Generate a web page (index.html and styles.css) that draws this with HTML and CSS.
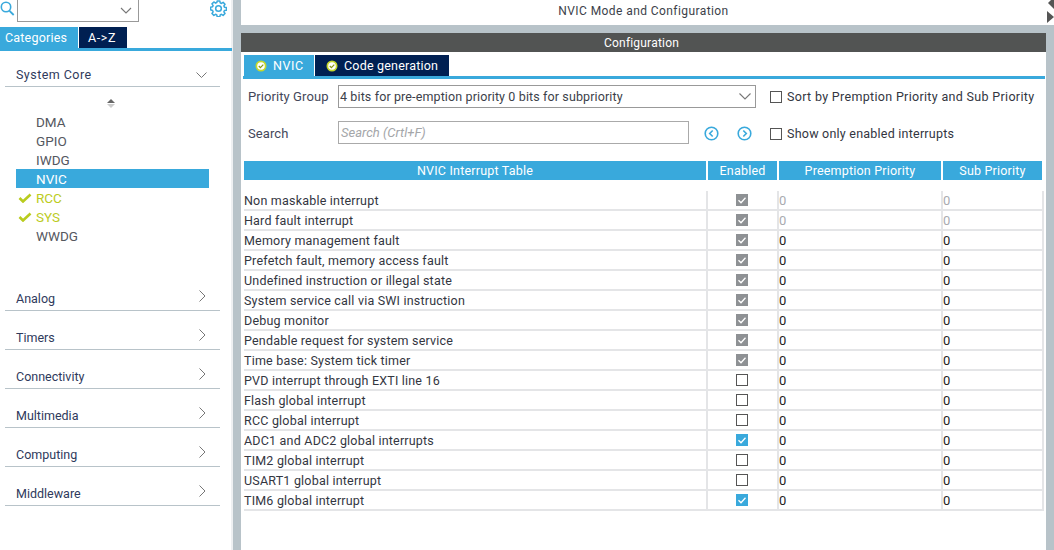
FILE: index.html
```html
<!DOCTYPE html>
<html lang="en">
<head>
<meta charset="utf-8">
<title>NVIC Mode and Configuration</title>
<link rel="stylesheet" href="styles.css">
</head>
<body>
<div class="app">
  <aside class="side">
    <div class="searchbar">
      <svg class="search-ico" width="15" height="17" viewBox="0 0 15 17"><circle cx="6" cy="7" r="4.7" fill="none" stroke="#39a9dc" stroke-width="1.6"/><path d="M9.5 10.8 13.7 15" fill="none" stroke="#39a9dc" stroke-width="1.8"/></svg>
      <div class="side-select"><svg width="12" height="7" viewBox="0 0 12 7"><path d="M1 1l5 5 5-5" fill="none" stroke="#777" stroke-width="1.1"/></svg></div>
      <svg class="gear" width="17" height="17" viewBox="0 0 18 18"><path d="M7.6 1h2.8l.4 2.1 1.3.6 1.8-1.2 2 2-1.2 1.8.6 1.3 2.1.4v2.8l-2.1.4-.6 1.3 1.2 1.8-2 2-1.8-1.2-1.3.6-.4 2.1H7.6l-.4-2.1-1.3-.6-1.8 1.2-2-2 1.2-1.8-.6-1.3L.6 10.400V7.600l2.100-.4.6-1.300-1.200-1.800 2-2 1.800 1.200 1.300-.6z" fill="none" stroke="#39a9dc" stroke-width="1.6" stroke-linejoin="round"/><circle cx="9" cy="9" r="3" fill="none" stroke="#39a9dc" stroke-width="1.6"/></svg>
    </div>
    <div class="side-tabs">
      <span class="tab tab-on tab-cat">Categories</span>
      <span class="tab tab-off tab-az">A-&gt;Z</span>
    </div>
    <div class="cat cat-first"><span>System Core</span>
      <svg width="11" height="6" viewBox="0 0 11 6"><path d="M.5.500l5 5 5-5" fill="none" stroke="#777" stroke-width="1"/></svg>
    </div>
    <div class="list">
      <div class="sorter"><i class="up"></i><i class="down"></i></div>
      <div class="item">DMA</div>
      <div class="item">GPIO</div>
      <div class="item">IWDG</div>
      <div class="item item-sel">NVIC</div>
      <div class="item item-ok"><svg width="14" height="10" viewBox="0 0 14 10"><path d="M1.500 5l3.500 3.500L12.500 1.500" fill="none" stroke="#b9cc1e" stroke-width="2.600"/></svg>RCC</div>
      <div class="item item-ok"><svg width="14" height="10" viewBox="0 0 14 10"><path d="M1.500 5l3.500 3.500L12.500 1.500" fill="none" stroke="#b9cc1e" stroke-width="2.600"/></svg>SYS</div>
      <div class="item">WWDG</div>
    </div>
    <div class="cat"><span>Analog</span><svg width="7" height="12" viewBox="0 0 7 12"><path d="M.5.500l5.500 5.500-5.500 5.500" fill="none" stroke="#777" stroke-width="1"/></svg></div>
    <div class="cat"><span>Timers</span><svg width="7" height="12" viewBox="0 0 7 12"><path d="M.5.500l5.500 5.500-5.500 5.500" fill="none" stroke="#777" stroke-width="1"/></svg></div>
    <div class="cat"><span>Connectivity</span><svg width="7" height="12" viewBox="0 0 7 12"><path d="M.5.500l5.500 5.500-5.500 5.500" fill="none" stroke="#777" stroke-width="1"/></svg></div>
    <div class="cat"><span>Multimedia</span><svg width="7" height="12" viewBox="0 0 7 12"><path d="M.5.500l5.500 5.500-5.500 5.500" fill="none" stroke="#777" stroke-width="1"/></svg></div>
    <div class="cat"><span>Computing</span><svg width="7" height="12" viewBox="0 0 7 12"><path d="M.5.500l5.500 5.500-5.500 5.500" fill="none" stroke="#777" stroke-width="1"/></svg></div>
    <div class="cat"><span>Middleware</span><svg width="7" height="12" viewBox="0 0 7 12"><path d="M.5.500l5.500 5.500-5.500 5.500" fill="none" stroke="#777" stroke-width="1"/></svg></div>
  </aside>
  <main class="main">
    <div class="title-row">
      <div class="title">NVIC Mode and Configuration</div>
      <div class="arrows"><i class="arr arr-l"></i><i class="arr arr-r"></i></div>
    </div>
    <div class="gap-row"></div>
    <div class="conf-row">
      <div class="conf">
        <div class="conf-head">Configuration</div>
        <div class="conf-tabs">
          <span class="tab tab-on tab-nvic"><svg width="12" height="12" viewBox="0 0 12 12"><circle cx="6" cy="6" r="5.500" fill="#c5d82c"/><circle cx="6" cy="6" r="3.800" fill="#fff"/><path d="M3.800 6l1.600 1.600 2.900-2.900" fill="none" stroke="#8a9a10" stroke-width="1.200"/></svg>NVIC</span>
          <span class="tab tab-off tab-code"><svg width="12" height="12" viewBox="0 0 12 12"><circle cx="6" cy="6" r="5.500" fill="#c5d82c"/><circle cx="6" cy="6" r="3.800" fill="#fff"/><path d="M3.800 6l1.600 1.600 2.900-2.900" fill="none" stroke="#8a9a10" stroke-width="1.200"/></svg>Code generation</span>
        </div>
        <div class="conf-line"></div>
        <div class="form-row form-first">
          <span class="lbl">Priority Group</span>
          <div class="select">4 bits for pre-emption priority 0 bits for subpriority<svg width="12" height="7" viewBox="0 0 12 7"><path d="M.5.500l5.500 5.500 5.500-5.500" fill="none" stroke="#777" stroke-width="1.100"/></svg></div>
          <label class="chk-label"><i class="box box-empty"></i>Sort by Premption Priority and Sub Priority</label>
        </div>
        <div class="form-row form-second">
          <span class="lbl">Search</span>
          <div class="input">Search (Crtl+F)</div>
          <svg class="nav nav-prev" width="15" height="15" viewBox="0 0 15 15"><circle cx="7.500" cy="7.500" r="6.300" fill="none" stroke="#39a9dc" stroke-width="1.600"/><path d="M8.700 4.500l-3 3 3 3" fill="none" stroke="#39a9dc" stroke-width="1.600"/></svg>
          <svg class="nav nav-next" width="15" height="15" viewBox="0 0 15 15"><circle cx="7.500" cy="7.500" r="6.300" fill="none" stroke="#39a9dc" stroke-width="1.600"/><path d="M6.300 4.500l3 3-3 3" fill="none" stroke="#39a9dc" stroke-width="1.600"/></svg>
          <label class="chk-label"><i class="box box-empty"></i>Show only enabled interrupts</label>
        </div>
        <div class="thead">
          <div>NVIC Interrupt Table</div><div>Enabled</div><div>Preemption Priority</div><div>Sub Priority</div>
        </div>
        <div class="tbody">
          <div class="row row-locked"><div>Non maskable interrupt</div><div class="c"><i class="box box-gray"><svg viewBox="0 0 12 12"><path d="M2.500 6.300l2.500 2.500 4.500-5" fill="none" stroke="#fff" stroke-width="1.300"/></svg></i></div><div class="n">0</div><div class="n">0</div></div>
          <div class="row row-locked"><div>Hard fault interrupt</div><div class="c"><i class="box box-gray"><svg viewBox="0 0 12 12"><path d="M2.500 6.300l2.500 2.500 4.500-5" fill="none" stroke="#fff" stroke-width="1.300"/></svg></i></div><div class="n">0</div><div class="n">0</div></div>
          <div class="row"><div>Memory management fault</div><div class="c"><i class="box box-gray"><svg viewBox="0 0 12 12"><path d="M2.500 6.300l2.500 2.500 4.500-5" fill="none" stroke="#fff" stroke-width="1.300"/></svg></i></div><div class="n">0</div><div class="n">0</div></div>
          <div class="row"><div>Prefetch fault, memory access fault</div><div class="c"><i class="box box-gray"><svg viewBox="0 0 12 12"><path d="M2.500 6.300l2.500 2.500 4.500-5" fill="none" stroke="#fff" stroke-width="1.300"/></svg></i></div><div class="n">0</div><div class="n">0</div></div>
          <div class="row"><div>Undefined instruction or illegal state</div><div class="c"><i class="box box-gray"><svg viewBox="0 0 12 12"><path d="M2.500 6.300l2.500 2.500 4.500-5" fill="none" stroke="#fff" stroke-width="1.300"/></svg></i></div><div class="n">0</div><div class="n">0</div></div>
          <div class="row"><div>System service call via SWI instruction</div><div class="c"><i class="box box-gray"><svg viewBox="0 0 12 12"><path d="M2.500 6.300l2.500 2.500 4.500-5" fill="none" stroke="#fff" stroke-width="1.300"/></svg></i></div><div class="n">0</div><div class="n">0</div></div>
          <div class="row"><div>Debug monitor</div><div class="c"><i class="box box-gray"><svg viewBox="0 0 12 12"><path d="M2.500 6.300l2.500 2.500 4.500-5" fill="none" stroke="#fff" stroke-width="1.300"/></svg></i></div><div class="n">0</div><div class="n">0</div></div>
          <div class="row"><div>Pendable request for system service</div><div class="c"><i class="box box-gray"><svg viewBox="0 0 12 12"><path d="M2.500 6.300l2.500 2.500 4.500-5" fill="none" stroke="#fff" stroke-width="1.300"/></svg></i></div><div class="n">0</div><div class="n">0</div></div>
          <div class="row"><div>Time base: System tick timer</div><div class="c"><i class="box box-gray"><svg viewBox="0 0 12 12"><path d="M2.500 6.300l2.500 2.500 4.500-5" fill="none" stroke="#fff" stroke-width="1.300"/></svg></i></div><div class="n">0</div><div class="n">0</div></div>
          <div class="row"><div>PVD interrupt through EXTI line 16</div><div class="c"><i class="box box-empty"></i></div><div class="n">0</div><div class="n">0</div></div>
          <div class="row"><div>Flash global interrupt</div><div class="c"><i class="box box-empty"></i></div><div class="n">0</div><div class="n">0</div></div>
          <div class="row"><div>RCC global interrupt</div><div class="c"><i class="box box-empty"></i></div><div class="n">0</div><div class="n">0</div></div>
          <div class="row"><div>ADC1 and ADC2 global interrupts</div><div class="c"><i class="box box-blue"><svg viewBox="0 0 12 12"><path d="M2.500 6.300l2.500 2.500 4.500-5" fill="none" stroke="#fff" stroke-width="1.300"/></svg></i></div><div class="n">0</div><div class="n">0</div></div>
          <div class="row"><div>TIM2 global interrupt</div><div class="c"><i class="box box-empty"></i></div><div class="n">0</div><div class="n">0</div></div>
          <div class="row"><div>USART1 global interrupt</div><div class="c"><i class="box box-empty"></i></div><div class="n">0</div><div class="n">0</div></div>
          <div class="row"><div>TIM6 global interrupt</div><div class="c"><i class="box box-blue"><svg viewBox="0 0 12 12"><path d="M2.500 6.300l2.500 2.500 4.500-5" fill="none" stroke="#fff" stroke-width="1.300"/></svg></i></div><div class="n">0</div><div class="n">0</div></div>
        </div>
      </div>
      <div class="right-strip"></div>
    </div>
  </main>
</div>
</body>
</html>
```
FILE: styles.css
```css
* { box-sizing: border-box; }
html, body { margin: 0; height: 100%; overflow: hidden; background: #fff; }
body { font-family: Roboto, "Liberation Sans", sans-serif; font-size: 13px; color: #3c3f4a; }
.app { display: flex; width: 1054px; height: 550px; }

/* sidebar */
.side { width: 241px; flex: none; height: 550px; background: #fff; border-right: 8px solid #b8c3c9; box-shadow: inset -2px 0 0 #eef0f2; }
.searchbar { height: 27px; display: flex; align-items: flex-start; }
.search-ico { flex: none; }
.side-select { width: 122px; height: 23px; margin: -1px 0 0 2px; border: 1px solid #999; display: flex; justify-content: flex-end; align-items: center; padding-right: 6px; }
.gear { margin: 0 0 0 71px; flex: none; }
.side-tabs { display: flex; height: 24px; width: 232px; border-bottom: 3px solid #39a9dc; }
.tab { color: #fff; font-size: 12.500px; letter-spacing: .6px; height: 21px; display: flex; align-items: center; }
.tab-on { background: #39a9dc; }
.tab-off { background: #002052; }
.tab-cat { width: 78px; padding-left: 5px; margin-right: 1px; letter-spacing: .2px; }
.tab-az { width: 48px; padding-left: 9px; }
.cat { height: 39px; width: 215px; margin-left: 5px; padding: 0 14px 4px 11px; display: flex; justify-content: space-between; align-items: flex-end; border-bottom: 1px solid #b8c3c9; color: #2f3a5c; font-size: 12.500px; }
.cat svg { margin-bottom: 4px; }
.cat-first { height: 36px; padding-right: 13px; letter-spacing: .45px; }
.list { height: 185px; padding-left: 16px; }
.sorter { height: 25px; width: 189px; display: flex; flex-direction: column; align-items: center; padding-top: 12px; gap: 1px; }
.sorter i { display: block; width: 0; height: 0; border-left: 4px solid transparent; border-right: 4px solid transparent; }
.sorter .up { border-bottom: 4px solid #666; }
.sorter .down { border-top: 4px solid #ccc; }
.item { height: 19px; width: 193px; padding: 1px 0 0 20px; display: flex; align-items: center; color: #55585f; font-size: 13.500px; position: relative; }
.item-sel { background: #39a9dc; color: #fff; }
.item-ok { color: #bccc1e; }
.item-ok svg { position: absolute; left: 2px; top: 5px; }

/* main */
.main { flex: 1; display: flex; flex-direction: column; height: 550px; }
.title-row { height: 25px; display: flex; }
.title { width: 805px; text-align: center; font-size: 12px; letter-spacing: .42px; line-height: 22px; color: #3c3f4a; }
.arrows { width: 8px; display: flex; flex-direction: column; align-items: flex-end; }
.arr { display: block; width: 0; height: 0; border-top: 6px solid transparent; border-bottom: 6px solid transparent; }
.arr-l { border-right: 6px solid #555; margin-top: -3px; }
.arr-r { border-left: 7px solid #555; margin-top: 2px; }
.gap-row { height: 8px; background: #b8c3c9; }
.conf-row { flex: 1; display: flex; min-height: 0; }
.conf { width: 805px; flex: none; }
.right-strip { flex: 1; background: #b8c3c9; }
.conf-head { height: 19px; background: #525453; color: #fff; font-size: 12px; letter-spacing: .2px; text-align: center; line-height: 20px; padding-right: 4px; }
.conf-tabs { display: flex; padding: 3px 0 0 3px; height: 24px; }
.conf-tabs svg { margin-right: 6px; flex: none; }
.tab-nvic { width: 70px; padding-left: 11px; margin-right: 1px; }
.tab-code { width: 134px; padding-left: 11px; letter-spacing: .2px; }
.conf-line { height: 3px; margin-left: 2px; width: 802px; background: #39a9dc; }
.form-row { display: flex; align-items: center; }
.form-first { height: 23px; margin-top: 6px; }
.form-second { height: 25px; margin-top: 13px; }
.lbl { width: 97px; padding-left: 7px; font-size: 13px; flex: none; letter-spacing: .08px; color: #44475a; }
.select { width: 418px; height: 23px; border: 1px solid #999; display: flex; justify-content: space-between; align-items: center; padding: 0 4px 0 1px; font-size: 12.500px; letter-spacing: .12px; color: #3c3f4a; flex: none; }
.input { align-self: flex-start; width: 351px; height: 23px; border: 1px solid #aaa; font-style: italic; color: #a4a6a9; font-size: 13px; padding-left: 2px; line-height: 22px; flex: none; }
.nav { flex: none; }
.nav-prev { margin-left: 15px; }
.nav-next { margin-left: 18px; }
.chk-label { display: flex; align-items: center; gap: 5px; font-size: 12.500px; letter-spacing: .32px; color: #33363f; margin-left: 14px; }
.form-second .chk-label { margin-left: 18px; letter-spacing: .23px; }
.box { display: block; width: 12px; height: 12px; flex: none; }
.box svg { display: block; width: 12px; height: 12px; }
.box-empty { border: 1px solid #555; background: #fff; }
.box-gray { background: #8e9194; }
.box-blue { background: #39a9dc; }
.thead { display: grid; grid-template-columns: 462px 69px 162px 99px; gap: 2px; margin: 15px 0 0 3px; width: 801px; height: 19px; }
.thead > div { background: #39a9dc; color: #fff; text-align: center; font-size: 12.500px; letter-spacing: .2px; line-height: 19px; }
.tbody { margin: 11px 0 0 3px; width: 800px; }
.row { display: grid; grid-template-columns: 462px 71px 164px 103px; height: 20px; border-bottom: 2px solid #e4e5e7; align-items: start; font-size: 12.500px; color: #33363f; letter-spacing: .2px; }
.row > div { height: 18px; line-height: 19px; }
.row > div + div { border-left: 2px solid #e4e5e7; height: 20px; }
.row > div:last-child { border-right: 2px solid #e4e5e7; }
.row .c { display: flex; justify-content: center; align-items: center; padding: 0 1px 2px 0; }
.row .n { color: #222; font-size: 13px; }
.row-locked .n { color: #a9abb0; }
```
